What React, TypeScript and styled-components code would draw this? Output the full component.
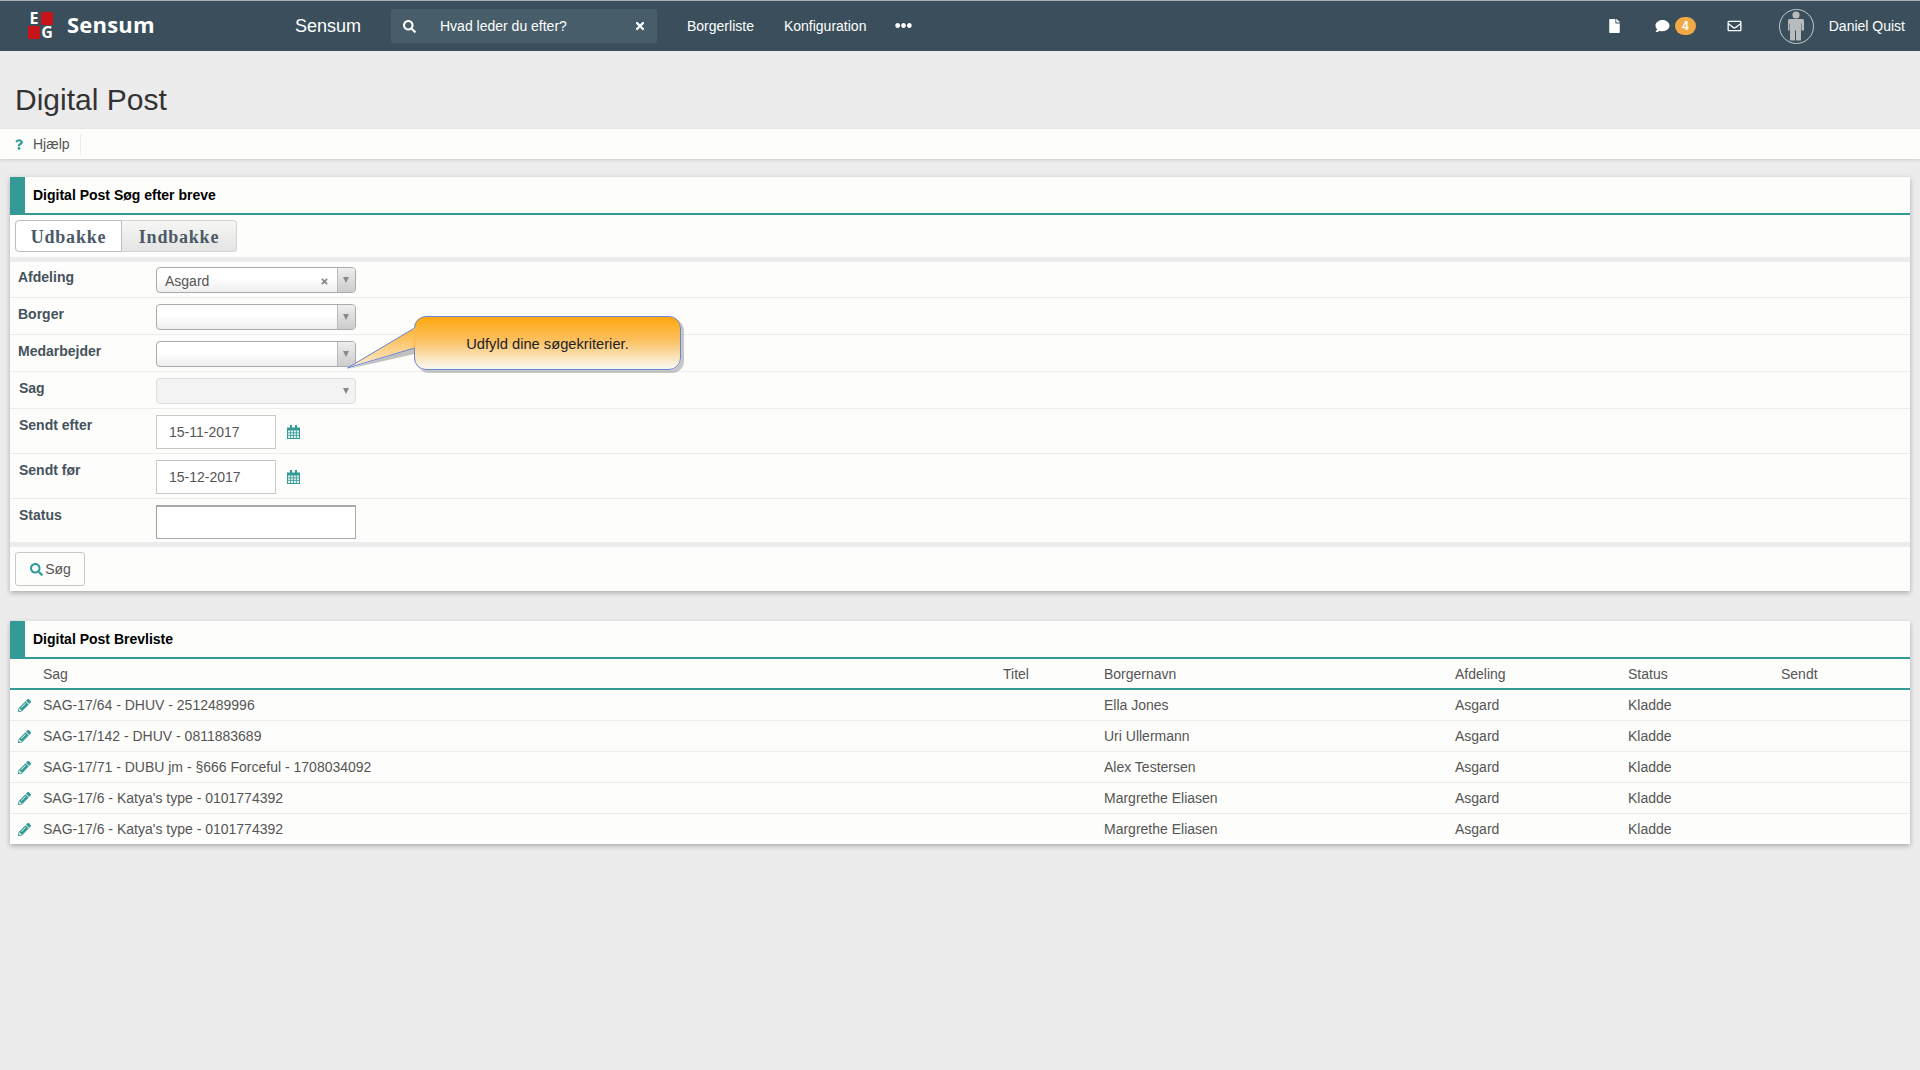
import React from "react";
import styled, { createGlobalStyle } from "styled-components";
import { FaSearch, FaTimes, FaFile, FaComment, FaRegEnvelope, FaPencilAlt, FaEllipsisH, FaQuestion } from "react-icons/fa";

const Global = createGlobalStyle`
  html, body { margin: 0; padding: 0; background: #ececec; }
  body { font-family: "Liberation Sans", Arial, sans-serif; font-size: 14px; color: #555; overflow: hidden; }
  * { box-sizing: border-box; }
`;

const Page = styled.div`
  min-height: 1070px;
  background: #ececec;
`;
const Nav = styled.header`
  height: 51px;
  background: #3a4f5b;
  border-top: 1px solid #a8acae;
  display: flex;
  align-items: center;
  color: #fff;
`;
const Brand = styled.div`
  width: 295px;
  padding-left: 28px;
  display: flex;
  align-items: center;
  gap: 14px;
`;
const LogoGrid = styled.div`
  display: grid;
  grid-template-columns: 12px 12px;
  grid-template-rows: 13px 13px;
  gap: 1px;
  margin-top: -1px;
`;
const LogoRed = styled.span`
  background: #c8141b;
  border-radius: 1px;
`;
const LogoLetter = styled.span`
  font: bold 16px/13px "Open Sans", "Liberation Sans", sans-serif;
  color: #fff;
  text-align: center;
`;
const BrandName = styled.span`
  font: bold 22px/26px "Open Sans", "Liberation Sans", sans-serif;
  letter-spacing: 0.2px;
  color: #fff;
  margin-top: -5px;
`;
const AppName = styled.span`
  font-size: 18px;
  width: 96px;
`;
const SearchBox = styled.div`
  width: 266px;
  height: 34px;
  background: #475e6a;
  border-radius: 2px;
  display: flex;
  align-items: center;
  padding: 0 11px 0 12px;
  margin-right: 30px;
  font-size: 14px;
`;
const SearchGlyph = styled(FaSearch)`
  width: 13px;
  height: 13px;
  margin-right: 24px;
`;
const SearchText = styled.span`
  flex: 1;
`;
const ClearGlyph = styled(FaTimes)`
  width: 12px;
  height: 12px;
`;
const NavLink = styled.span`
  font-size: 14px;
  margin-right: 30px;
`;
const Dots = styled(FaEllipsisH)`
  width: 17px;
  height: 17px;
  margin-left: -1px;
  margin-top: -2px;
`;
const NavRight = styled.div`
  margin-left: auto;
  display: flex;
  align-items: center;
  padding-right: 15px;
`;
const FileGlyph = styled(FaFile)`
  width: 13px;
  height: 14px;
  margin-right: 34px;
`;
const CommentGlyph = styled(FaComment)`
  width: 15px;
  height: 14px;
  margin-right: 5px;
`;
const Badge = styled.span`
  width: 21px;
  height: 18px;
  border-radius: 9px;
  background: #f0a944;
  font: bold 12px/18px "Liberation Sans", sans-serif;
  text-align: center;
  margin-right: 31px;
`;
const MailGlyph = styled(FaRegEnvelope)`
  width: 15px;
  height: 14px;
  margin-right: 37px;
`;
const Avatar = styled.span`
  width: 35px;
  height: 35px;
  border: 1px solid #c4cacd;
  border-radius: 50%;
  display: flex;
  align-items: center;
  justify-content: center;
  margin-right: 15px;
`;
const UserName = styled.span`
  font-size: 14px;
`;

const Title = styled.h1`
  margin: 0;
  height: 78px;
  padding: 31px 0 0 15px;
  font: normal 30px/36px "Liberation Sans", sans-serif;
  color: #333;
`;
const HelpBar = styled.div`
  height: 30px;
  background: #fdfdfb;
  box-shadow: 0 1px 3px rgba(0, 0, 0, 0.15);
  display: flex;
  align-items: center;
  padding-left: 15px;
  margin-bottom: 18px;
`;
const HelpItem = styled.span`
  display: flex;
  align-items: center;
  height: 21px;
  padding-right: 10px;
  border-right: 1px solid #ececec;
  color: #555;
`;
const HelpMark = styled(FaQuestion)`
  width: 8px;
  height: 11px;
  color: #339a96;
  margin-right: 10px;
`;

const Panel = styled.section`
  position: relative;
  margin: 0 10px 30px;
  background: #fdfdfb;
  box-shadow: 0 2px 5px rgba(0, 0, 0, 0.28);
`;
const PanelHead = styled.div`
  height: 38px;
  border-bottom: 2px solid #339a96;
  display: flex;
  align-items: center;
  background: #fdfdfb;
`;
const HeadMark = styled.span`
  width: 15px;
  height: 36px;
  background: #339a96;
  margin-right: 8px;
`;
const HeadTitle = styled.h2`
  margin: 0;
  font: bold 14px/18px "Liberation Sans", sans-serif;
  color: #000;
`;

const Tabs = styled.div`
  display: flex;
  padding: 5px;
  height: 42px;
`;
const Tab = styled.button<{ $active?: boolean }>`
  height: 32px;
  width: ${(p) => (p.$active ? "107px" : "115px")};
  padding: 2px 0 0;
  border: 1px solid ${(p) => (p.$active ? "#bdbdbd" : "#d4d4d4")};
  border-left-width: ${(p) => (p.$active ? "1px" : "0")};
  border-radius: ${(p) => (p.$active ? "4px 0 0 4px" : "0 4px 4px 0")};
  background: ${(p) => (p.$active ? "#fff" : "linear-gradient(#f6f6f4, #e4e4e4)")};
  font: bold 18px/28px "Liberation Serif", serif;
  letter-spacing: 0.8px;
  color: #4a5a66;
`;
const Strip = styled.div`
  height: 5px;
  background: #ececec;
`;
const Row = styled.div`
  display: flex;
  align-items: flex-start;
  padding: 6px 0 4px 8px;
  border-bottom: 1px solid #ececec;
  &:first-child {
    padding-top: 5px;
  }
  &:last-child {
    border-bottom: 0;
    padding-bottom: 3px;
  }
`;
const Label = styled.label<{ $inset?: boolean }>`
  width: 138px;
  padding-left: ${(p) => (p.$inset ? "1px" : "0")};
  font: bold 14px/20px "Liberation Sans", sans-serif;
  color: #46525c;
`;
const Select = styled.div<{ $disabled?: boolean }>`
  position: relative;
  width: 200px;
  height: 26px;
  border: 1px solid ${(p) => (p.$disabled ? "#ddd" : "#aaa")};
  border-radius: 4px;
  background: ${(p) => (p.$disabled ? "#f3f3f3" : "linear-gradient(#fff 45%, #eee)")};
  display: flex;
  align-items: center;
  padding-left: 8px;
  font-size: 14px;
  line-height: 24px;
  color: #555;
`;
const SelectValue = styled.span`
  flex: 1;
  padding-top: 2px;
`;
const SelectClear = styled(FaTimes)`
  width: 9px;
  height: 9px;
  color: #888;
  margin-right: 8px;
  margin-top: 3px;
`;
const SelectArrowBox = styled.span<{ $disabled?: boolean }>`
  width: 18px;
  height: 24px;
  flex: none;
  margin-left: auto;
  padding-right: 2px;
  border-left: 1px solid ${(p) => (p.$disabled ? "transparent" : "#bbb")};
  background: ${(p) => (p.$disabled ? "transparent" : "linear-gradient(#eee, #ccc)")};
  border-radius: 0 3px 3px 0;
  display: flex;
  align-items: center;
  justify-content: center;
  &::after {
    content: "";
    border-left: 3px solid transparent;
    border-right: 3px solid transparent;
    border-top: 6px solid #888;
  }
`;
const DateInput = styled.div`
  width: 120px;
  height: 34px;
  border: 1px solid #c8c8c8;
  background: #fff;
  padding-left: 12px;
  font-size: 14px;
  line-height: 32px;
  color: #555;
`;
const CalendarIcon = styled.svg`
  width: 13px;
  height: 14px;
  margin: 10px 0 0 11px;
`;
const StatusInput = styled.div`
  width: 200px;
  height: 34px;
  background: #fff;
  border: 1px solid #a9a9a9;
  border-top-width: 2px;
  border-left-color: #a0a0a0;
`;
const Actions = styled.div`
  height: 44px;
  padding: 5px;
`;
const SearchButton = styled.button`
  height: 34px;
  width: 70px;
  padding: 0 0 0 1px;
  border: 1px solid #c8c8c8;
  border-radius: 3px;
  background: #fdfdfb;
  display: flex;
  align-items: center;
  justify-content: center;
  gap: 2px;
  font: 14px "Liberation Sans", sans-serif;
  color: #555;
`;
const ButtonGlyph = styled(FaSearch)`
  width: 13px;
  height: 13px;
  color: #339a96;
`;

const Callout = styled.div`
  position: absolute;
  left: 404px;
  top: 139px;
  width: 267px;
  height: 54px;
  border: 1px solid #6a84d8;
  border-radius: 12px;
  background: linear-gradient(#ffa80f 0%, #fbc060 45%, #f9f1dc 90%, #fbf8f0 100%);
  box-shadow: 3px 3px 0 rgba(120, 120, 120, 0.4);
  display: flex;
  align-items: center;
  justify-content: center;
  padding-top: 1px;
  font-size: 14.7px;
  color: #222;
`;
const CalloutTail = styled.svg`
  position: absolute;
  left: -68px;
  top: 10px;
  width: 70px;
  height: 46px;
  overflow: visible;
`;

const Grid = styled.div`
  display: grid;
  grid-template-columns: 33px 960px 101px 351px 173px 153px 1fr;
  align-items: center;
`;
const TableHead = styled(Grid)`
  height: 31px;
  border-bottom: 2px solid #339a96;
`;
const TableRow = styled(Grid)`
  height: 31px;
  border-bottom: 1px solid #ececec;
  &:last-child {
    height: 30px;
    border-bottom: 0;
  }
`;
const Cell = styled.span`
  font-size: 14px;
  color: #555;
  white-space: nowrap;
`;
const Pencil = styled(FaPencilAlt)`
  width: 13px;
  height: 13px;
  color: #339a96;
  margin-left: 8px;
`;

const Calendar = () => (
  <CalendarIcon viewBox="0 0 13 14">
    <path d="M0 2.5h13V14H0z" fill="#339a96" />
    <path d="M3 0h2v4H3zM8 0h2v4H8z" fill="#339a96" />
    <path d="M1 5.5h11v7.5H1z" fill="#dff0ef" />
    <path d="M1 7.8h11M1 10.4h11M3.6 5.5v7.5M6.5 5.5v7.5M9.4 5.5v7.5" stroke="#339a96" strokeWidth="0.8" />
  </CalendarIcon>
);

const rows = [
  ["SAG-17/64 - DHUV - 2512489996", "Ella Jones"],
  ["SAG-17/142 - DHUV - 0811883689", "Uri Ullermann"],
  ["SAG-17/71 - DUBU jm - §666 Forceful - 1708034092", "Alex Testersen"],
  ["SAG-17/6 - Katya's type - 0101774392", "Margrethe Eliasen"],
  ["SAG-17/6 - Katya's type - 0101774392", "Margrethe Eliasen"],
];

export default function App() {
  return (
    <Page>
      <Global />
      <Nav>
        <Brand>
          <LogoGrid>
            <LogoLetter>E</LogoLetter>
            <LogoRed />
            <LogoRed />
            <LogoLetter>G</LogoLetter>
          </LogoGrid>
          <BrandName>Sensum</BrandName>
        </Brand>
        <AppName>Sensum</AppName>
        <SearchBox>
          <SearchGlyph />
          <SearchText>Hvad leder du efter?</SearchText>
          <ClearGlyph />
        </SearchBox>
        <NavLink>Borgerliste</NavLink>
        <NavLink>Konfiguration</NavLink>
        <Dots />
        <NavRight>
          <FileGlyph />
          <CommentGlyph />
          <Badge>4</Badge>
          <MailGlyph />
          <Avatar>
            <svg width="18" height="30" viewBox="0 0 18 30">
              <circle cx="9" cy="4" r="3.6" fill="#b8bcbe" />
              <path d="M1 9.5q0-1.5 1.5-1.5h13q1.500 0 1.500 1.500v10h-2.500v-7h-.5v17h-5v-10h-1v10h-5v-17h-.5v7H1z" fill="#b8bcbe" />
            </svg>
          </Avatar>
          <UserName>Daniel Quist</UserName>
        </NavRight>
      </Nav>

      <Title>Digital Post</Title>
      <HelpBar>
        <HelpItem>
          <HelpMark />
          Hjælp
        </HelpItem>
      </HelpBar>

      <Panel>
        <PanelHead>
          <HeadMark />
          <HeadTitle>Digital Post Søg efter breve</HeadTitle>
        </PanelHead>
        <Tabs>
          <Tab $active>Udbakke</Tab>
          <Tab>Indbakke</Tab>
        </Tabs>
        <Strip />
        <div>
          <Row>
            <Label>Afdeling</Label>
            <Select>
              <SelectValue>Asgard</SelectValue>
              <SelectClear />
              <SelectArrowBox />
            </Select>
          </Row>
          <Row>
            <Label>Borger</Label>
            <Select>
              <SelectArrowBox />
            </Select>
          </Row>
          <Row>
            <Label>Medarbejder</Label>
            <Select>
              <SelectArrowBox />
            </Select>
          </Row>
          <Row>
            <Label $inset>Sag</Label>
            <Select $disabled>
              <SelectArrowBox $disabled />
            </Select>
          </Row>
          <Row>
            <Label $inset>Sendt efter</Label>
            <DateInput>15-11-2017</DateInput>
            <Calendar />
          </Row>
          <Row>
            <Label $inset>Sendt før</Label>
            <DateInput>15-12-2017</DateInput>
            <Calendar />
          </Row>
          <Row>
            <Label $inset>Status</Label>
            <StatusInput />
          </Row>
        </div>
        <Strip />
        <Actions>
          <SearchButton>
            <ButtonGlyph />
            Søg
          </SearchButton>
        </Actions>
        <Callout>
          <CalloutTail viewBox="0 0 70 46">
            <defs>
              <linearGradient id="tailFill" x1="0" y1="0" x2="0" y2="1">
                <stop offset="0" stopColor="#fdb338" />
                <stop offset="1" stopColor="#f9ecd0" />
              </linearGradient>
            </defs>
            <path d="M1 42L67.500 21V27Z" fill="rgba(120,120,120,0.45)" />
            <path d="M67.500 1L0.500 41L67.500 21" fill="url(#tailFill)" stroke="#6a84d8" strokeWidth="1" />
            <path d="M67.500 1.500V20.500" stroke="#fcbb50" strokeWidth="2" />
          </CalloutTail>
          Udfyld dine søgekriterier.
        </Callout>
      </Panel>

      <Panel>
        <PanelHead>
          <HeadMark />
          <HeadTitle>Digital Post Brevliste</HeadTitle>
        </PanelHead>
        <TableHead>
          <span />
          <Cell>Sag</Cell>
          <Cell>Titel</Cell>
          <Cell>Borgernavn</Cell>
          <Cell>Afdeling</Cell>
          <Cell>Status</Cell>
          <Cell>Sendt</Cell>
        </TableHead>
        {rows.map(([sag, navn], i) => (
          <TableRow key={i}>
            <Pencil />
            <Cell>{sag}</Cell>
            <span />
            <Cell>{navn}</Cell>
            <Cell>Asgard</Cell>
            <Cell>Kladde</Cell>
            <span />
          </TableRow>
        ))}
      </Panel>
    </Page>
  );
}
